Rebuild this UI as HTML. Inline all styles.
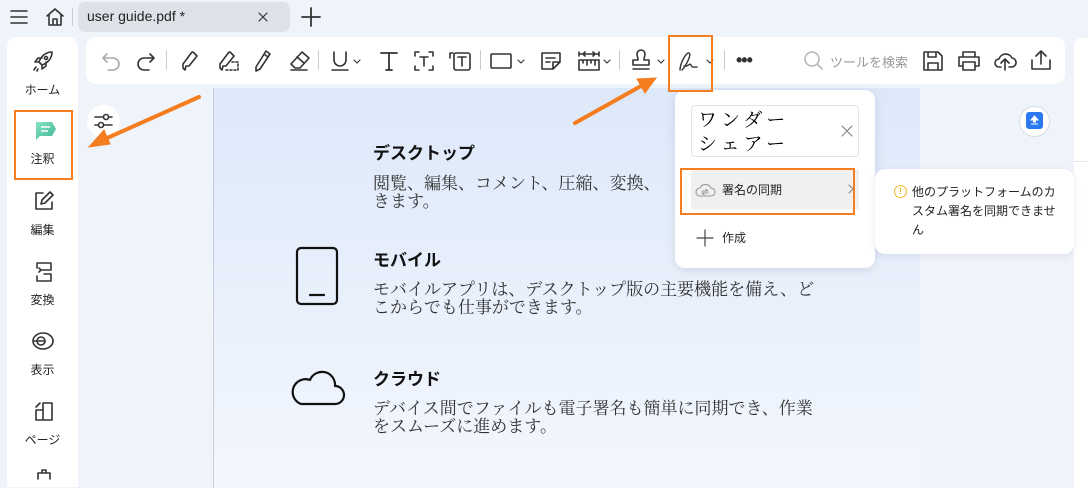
<!DOCTYPE html>
<html><head><meta charset="utf-8"><style>
*{margin:0;padding:0;box-sizing:border-box}
body{width:1088px;height:476px;overflow:hidden;background:#eff3fa;font-family:"Liberation Sans","Noto Sans CJK JP",sans-serif;color:#222;position:relative}
.a{position:absolute}
svg{overflow:visible}
.ic{position:absolute;fill:none;stroke:#333;stroke-width:1.6;stroke-linecap:round;stroke-linejoin:round}
.lab{position:absolute;width:71px;left:7px;text-align:center;font-size:12px;color:#222}
.h{position:absolute;left:373px;font-size:17px;font-weight:bold;color:#111}
.b{position:absolute;left:373px;font-size:17px;line-height:18px;color:#333;font-family:"Liberation Serif","Noto Serif CJK JP",serif;width:490px}
.sep{position:absolute;top:50px;width:1px;height:20px;background:#ccc}
.ob{position:absolute;border:2px solid #f47d20}
</style></head><body>
<!-- top bar -->
<svg class="ic" style="left:10px;top:9px" width="18" height="16"><path d="M1 2H17M1 8H17M1 14H17"/></svg>
<svg class="ic" style="left:45px;top:7px" width="20" height="20"><path d="M2 9L10 2L18 9M4 8V18H16V8M8 18V12H12V18"/></svg>
<div class="a" style="left:72px;top:8px;width:1px;height:18px;background:#ccc"></div>
<div class="a" style="left:78px;top:2px;width:212px;height:30px;background:#dde1e8;border-radius:7px"></div>
<div class="a" style="left:87px;top:8px;font-size:14px;color:#222">user guide.pdf *</div>
<svg class="ic" style="left:258px;top:12px;stroke-width:1.2" width="10" height="10"><path d="M1 1L9 9M9 1L1 9"/></svg>
<svg class="ic" style="left:301px;top:7px;stroke-width:1.8" width="20" height="20"><path d="M10 1V19M1 10H19"/></svg>

<!-- sidebar -->
<div class="a" style="left:7px;top:37px;width:71px;height:450px;background:#fff;border-radius:10px 10px 0 0"></div>
<svg class="ic" style="left:32px;top:50px" width="22" height="22"><path d="M20 2C14 2 9 6 7 12L10 15C16 13 20 8 20 2ZM7 12L3 12L6 8L10 8M10 15V19L14 16V12M4 17L2 20M6 19L5 21"/><circle cx="14" cy="8" r="1.5"/></svg>
<div class="lab" style="top:81px">ホーム</div>
<svg class="a" style="left:32px;top:118px" width="26" height="24"><defs><linearGradient id="g" x1="0" y1="0" x2="1" y2="1"><stop offset="0" stop-color="#6fe0b8"/><stop offset="1" stop-color="#1fa682"/></linearGradient></defs><path d="M4 4H20L24 11L20 18H8L4 22Z" fill="url(#g)" opacity=".85"/><path d="M9 9H18M9 13H16" stroke="#fff" stroke-width="1.5"/></svg>
<div class="lab" style="top:150px">注釈</div>
<svg class="ic" style="left:34px;top:191px" width="20" height="20"><path d="M9 2H2V18H18V11M7 13L8 9L16 1L19 4L11 12Z"/></svg>
<div class="lab" style="top:221px">編集</div>
<svg class="ic" style="left:35px;top:262px" width="18" height="20"><path d="M2 1H16V8H6M2 1V6M6 8L4 6M6 8L4 10M9 12H16V19H2V14"/></svg>
<div class="lab" style="top:291px">変換</div>
<svg class="ic" style="left:32px;top:331px" width="22" height="20"><ellipse cx="11" cy="10" rx="10" ry="8"/><circle cx="9" cy="10" r="4"/><path d="M2 10H13"/></svg>
<div class="lab" style="top:361px">表示</div>
<svg class="ic" style="left:34px;top:401px" width="20" height="20"><path d="M9 2H18V19H2V9H9ZM9 9V19M6 2L2 6"/></svg>
<div class="lab" style="top:431px">ページ</div>
<svg class="ic" style="left:36px;top:470px" width="16" height="10"><path d="M2 9V3H14V9M6 3V0H10V3"/></svg>

<!-- toolbar -->
<div class="a" style="left:86px;top:37px;width:979px;height:47px;background:#fff;border-radius:10px"></div>
<svg class="ic" style="left:102px;top:52px;stroke:#aaa" width="18" height="18"><path d="M5 2L1 6L5 10M1 6H11A6 6 0 0 1 11 18H6"/></svg>
<svg class="ic" style="left:137px;top:52px" width="18" height="18"><path d="M13 2L17 6L13 10M17 6H7A6 6 0 0 0 7 18H12"/></svg>
<div class="sep" style="left:166px"></div>
<svg class="ic" style="left:181px;top:50px" width="18" height="22"><path d="M12 2L16 6L8 16H5L4 20L2 18V14L11 2Z"/></svg>
<svg class="ic" style="left:218px;top:50px" width="22" height="22"><path d="M12 2L16 6L8 16H5L4 20L2 18V14L11 2Z"/><path d="M14 12H20V20H8" stroke-dasharray="2 2"/></svg>
<svg class="ic" style="left:253px;top:50px" width="18" height="22"><path d="M13 1L17 4L7 19L3 21L3 17ZM11 4L15 7"/></svg>
<svg class="ic" style="left:289px;top:51px" width="22" height="20"><path d="M13 1L20 7L11 17H6L2 13ZM8 6L15 12M2 19H18" /></svg>
<div class="sep" style="left:318px"></div>
<svg class="ic" style="left:331px;top:51px" width="18" height="20"><path d="M3 1V9A6 6 0 0 0 15 9V1M1 19H17"/></svg>
<svg class="ic" style="left:353px;top:59px;stroke-width:1.1" width="8" height="5"><path d="M1 1L4 4L7 1"/></svg>
<svg class="ic" style="left:379px;top:51px;stroke-width:1.8" width="20" height="20"><path d="M2 2H18M10 2V19M7 19H13"/></svg>
<svg class="ic" style="left:414px;top:51px" width="20" height="20"><path d="M1 5V1H5M15 1H19V5M19 15V19H15M5 19H1V15M6 6H14M10 6V15"/></svg>
<svg class="ic" style="left:449px;top:50px" width="22" height="22"><rect x="5" y="3" width="16" height="17" rx="2"/><path d="M9 7H17M13 7V16M1 3V8M1 3H4"/></svg>
<div class="sep" style="left:480px"></div>
<svg class="ic" style="left:490px;top:53px" width="22" height="16"><rect x="1" y="1" width="20" height="14" rx="1"/></svg>
<svg class="ic" style="left:517px;top:59px;stroke-width:1.1" width="8" height="5"><path d="M1 1L4 4L7 1"/></svg>
<svg class="ic" style="left:541px;top:52px" width="20" height="18"><path d="M1 1H19V10L12 17H1ZM12 17V10H19M5 6H14M5 10H9"/></svg>
<svg class="ic" style="left:578px;top:51px" width="22" height="20"><path d="M1 9H21V19H1ZM5 9V12M9 9V14M13 9V12M17 9V14M1 3H21M1 1V5M21 1V5M7 1L5 3L7 5M15 1L17 3L15 5"/></svg>
<svg class="ic" style="left:603px;top:59px;stroke-width:1.1" width="8" height="5"><path d="M1 1L4 4L7 1"/></svg>
<div class="sep" style="left:619px"></div>
<svg class="ic" style="left:631px;top:50px" width="20" height="22"><path d="M7 10C7 7 6 6 6 4A4 4 0 0 1 14 4C14 6 13 7 13 10H18V15H2V10ZM2 19H18"/></svg>
<svg class="ic" style="left:657px;top:59px;stroke-width:1.1" width="8" height="5"><path d="M1 1L4 4L7 1"/></svg>
<svg class="ic" style="left:678px;top:50px;stroke-width:1.4" width="22" height="22"><path d="M2 20C2 14 8 2 11 3C14 4 8 16 4 20M6 16C9 18 12 12 13 15C14 18 16 17 19 17"/></svg>
<svg class="ic" style="left:706px;top:59px;stroke-width:1.1" width="8" height="5"><path d="M1 1L4 4L7 1"/></svg>
<div class="sep" style="left:724px"></div>
<div class="a" style="left:736px;top:50px;font-size:18px;font-weight:bold;letter-spacing:-1px;color:#333">•••</div>
<svg class="ic" style="left:804px;top:51px;stroke:#bbb;stroke-width:1.7" width="20" height="20"><circle cx="8" cy="8" r="7"/><path d="M13 13L18 18"/></svg>
<div class="a" style="left:830px;top:52px;font-size:13px;color:#999">ツールを検索</div>
<svg class="ic" style="left:923px;top:51px" width="20" height="20"><path d="M1 1H15L19 5V19H1ZM5 1V6H13V1M5 19V12H15V19"/></svg>
<svg class="ic" style="left:958px;top:51px" width="22" height="20"><path d="M5 6V1H17V6M5 15H1V6H21V15H17M5 11H17V19H5Z"/></svg>
<svg class="ic" style="left:994px;top:51px" width="22" height="20"><path d="M7 16H5A4 4 0 0 1 5 8A7 7 0 0 1 18 7A4.5 4.5 0 0 1 17 16H15M11 19V9M7 12L11 8L15 12"/></svg>
<svg class="ic" style="left:1031px;top:50px" width="20" height="20"><path d="M10 14V1M5 6L10 1L15 6M1 10V19H19V10"/></svg>

<!-- canvas -->
<div class="a" style="left:213px;top:88px;width:707px;height:400px;background:linear-gradient(#dde8f9,#f3f7fe);border-left:1px solid #ccd"></div>
<div class="a" style="left:1074px;top:38px;width:20px;height:450px;background:#fff;border-radius:8px 0 0 0"></div>
<div class="a" style="left:1074px;top:161px;width:20px;height:1px;background:#e3e6ec"></div>
<div class="a" style="left:1019px;top:106px;width:31px;height:31px;border-radius:50%;background:#fff;border:1px solid #d8dde6"></div>
<div class="a" style="left:1026px;top:112px;width:17px;height:17px;border-radius:3px;background:#2a79f0"></div>
<svg class="a" style="left:1029px;top:115px" width="11" height="11"><path d="M5.5 1L2 5H9Z M4.5 5V7H6.5V5M2 9H9" fill="#fff" stroke="#fff" stroke-width="1"/></svg>
<div class="a" style="left:87px;top:105px;width:33px;height:33px;border-radius:50%;background:#fff"></div>
<svg class="ic" style="left:94px;top:112px" width="20" height="18"><path d="M1 5H18M1 13H18"/><circle cx="12" cy="5" r="2.5" fill="#fff"/><circle cx="7" cy="13" r="2.5" fill="#fff"/></svg>

<div class="h" style="top:139px">デスクトップ</div>
<div class="b" style="top:175px">閲覧、編集、コメント、圧縮、変換、<br>きます。</div>
<svg class="ic" style="left:296px;top:247px;stroke:#111;stroke-width:2.2" width="42" height="58"><rect x="1" y="1" width="40" height="56" rx="4"/><path d="M14 48H28"/></svg>
<div class="h" style="top:246px">モバイル</div>
<div class="b" style="top:281px">モバイルアプリは、デスクトップ版の主要機能を備え、ど<br>こからでも仕事ができます。</div>
<svg class="ic" style="left:289px;top:367px;stroke:#111;stroke-width:2.2" width="56" height="40"><path d="M12 37H46A9 9 0 0 0 46 19A13 13 0 0 0 21 13A12 12 0 0 0 12 37Z"/></svg>
<div class="h" style="top:365px">クラウド</div>
<div class="b" style="top:400px">デバイス間でファイルも電子署名も簡単に同期でき、作業<br>をスムーズに進めます。</div>

<!-- dropdown -->
<div class="a" style="left:675px;top:90px;width:200px;height:178px;background:#fff;border-radius:10px;box-shadow:0 2px 10px rgba(0,0,0,.1)"></div>
<div class="a" style="left:691px;top:105px;width:168px;height:52px;border:1px solid #e2e4e8;border-radius:4px"></div>
<div class="a" style="left:698px;top:107px;font-size:19px;line-height:24px;letter-spacing:4px;font-family:'Noto Serif CJK JP',serif;color:#000">ワンダー<br>シェアー</div>
<svg class="ic" style="left:842px;top:126px;stroke:#888;stroke-width:1.2" width="10" height="10"><path d="M0 0L10 10M10 0L0 10"/></svg>
<div class="a" style="left:691px;top:169px;width:168px;height:40px;background:#f0f0f2"></div>
<svg class="ic" style="left:695px;top:182px;stroke:#999;stroke-width:1.1" width="20" height="16"><path d="M5 14A4 4 0 0 1 5 6A6 6 0 0 1 16 6A4 4 0 0 1 16 14Z M7 9H13L11 7.5M13 11H7L9 12.5"/></svg>
<div class="a" style="left:722px;top:181px;font-size:12px;color:#222">署名の同期</div>
<svg class="ic" style="left:848px;top:184px;stroke:#888;stroke-width:1.1" width="6" height="10"><path d="M1 1L5 5L1 9"/></svg>
<svg class="ic" style="left:697px;top:230px;stroke:#444;stroke-width:1.2" width="16" height="16"><path d="M8 0V16M0 8H16"/></svg>
<div class="a" style="left:722px;top:229px;font-size:12px;color:#222">作成</div>

<!-- tooltip -->
<div class="a" style="left:875px;top:169px;width:199px;height:85px;background:#fff;border-radius:10px;box-shadow:0 2px 8px rgba(0,0,0,.08)"></div>
<div class="a" style="left:894px;top:185px;width:13px;height:13px;border-radius:50%;border:1.5px solid #f0b429;color:#f0b429;font-size:9px;font-weight:bold;text-align:center;line-height:10px">!</div>
<div class="a" style="left:912px;top:183px;width:150px;font-size:12px;line-height:19px;color:#222">他のプラットフォームのカスタム署名を同期できません</div>

<!-- orange -->
<div class="ob" style="left:14px;top:110px;width:59px;height:70px"></div>
<div class="ob" style="left:668px;top:35px;width:45px;height:57px"></div>
<div class="ob" style="left:680px;top:168px;width:175px;height:47px"></div>
<svg class="a" style="left:0;top:0" width="1088" height="476"><g stroke="#f47d20" stroke-width="4" stroke-linecap="round" fill="#f47d20">
<path d="M199 97L105 139"/><path d="M89 147L104 130L110 144Z" stroke-width="1"/>
<path d="M575 123L641 86"/><path d="M656 78L637 79L645 93Z" stroke-width="1"/></g></svg>
</body></html>
